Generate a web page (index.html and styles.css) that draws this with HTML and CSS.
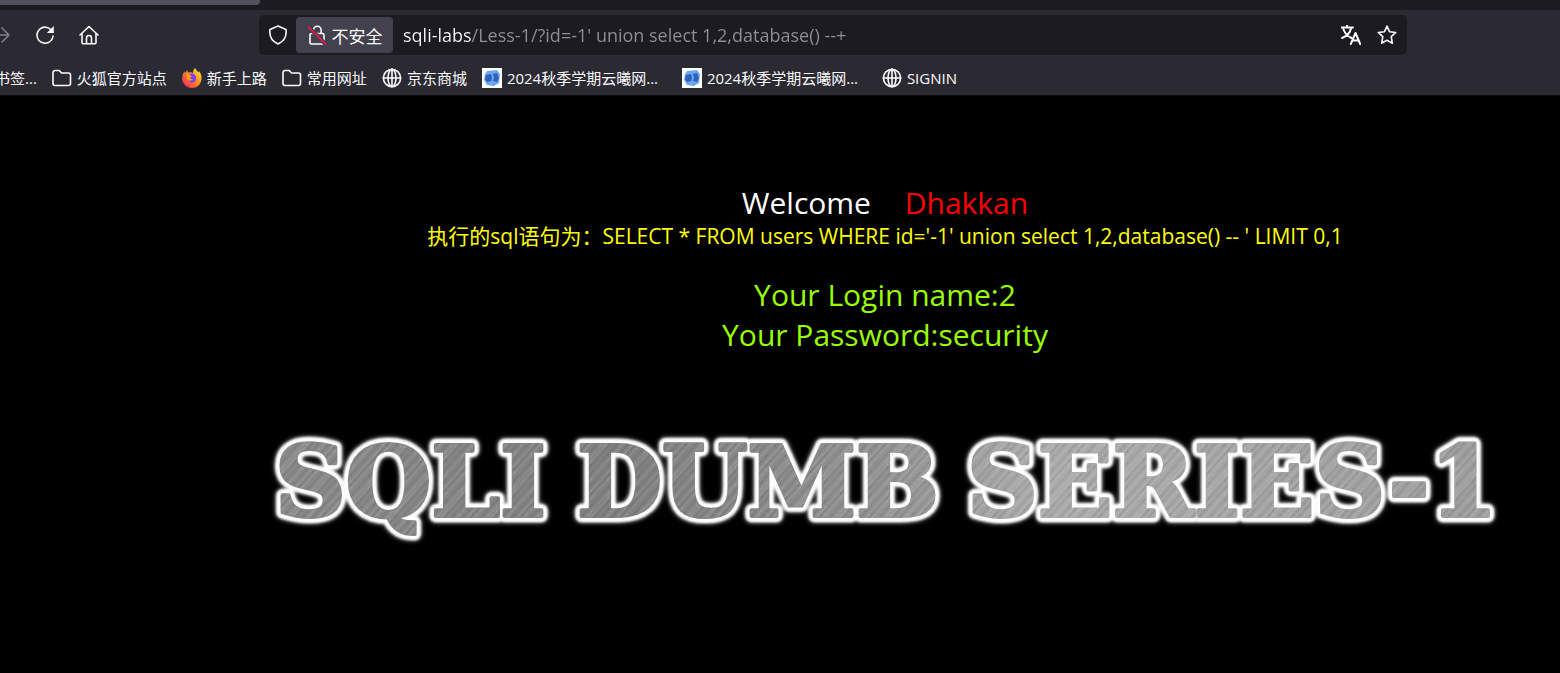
FILE: index.html
```
<!DOCTYPE html>
<html lang="zh-CN">
	<head>
		<meta charset="utf-8">
		<title>Less-1</title>
		<link rel="stylesheet" href="styles.css">
	</head>
	<body>
		<svg class="sprite" aria-hidden="true">
			<symbol id="folder" viewBox="0 0 20 20">
				<path d="M1 15.500V4.500a2 2 0 0 1 2-2h4.200l2.300 2.500h7a2 2 0 0 1 2 2v8.500a2 2 0 0 1-2 2H3a2 2 0 0 1-2-2z"/>
			</symbol>
			<symbol id="globe" viewBox="0 0 20 20">
				<circle cx="10" cy="10" r="8.600"/>
				<ellipse cx="10" cy="10" rx="4" ry="8.600"/>
				<path d="M10 1.400v17.200M1.400 10h17.200"/>
			</symbol>
			<symbol id="site" viewBox="0 0 20 20">
				<path fill="#fff" stroke="none" d="M0 0h20v20H0z"/>
				<path fill="#6ba6f8" stroke="none" d="M5 3l10-1 3 4-1 9-5 3-7-1-3-5 1-6z"/>
				<path fill="#2c62b8" stroke="none" d="M4 7l5-1 1 4-1 3-4 1-2-3zM11 6l4-1 2 5-2 4-4-1 1-3z"/>
			</symbol>
		</svg>

		<header class="browser">
			<div class="tabs"><div class="tab"></div></div>

			<div class="toolbar">
				<nav class="buttons">
					<button class="off" aria-label="前进">
						<svg viewBox="0 0 20 20"><path d="M1 10h17M11 3l7 7-7 7"/></svg>
					</button>
					<button aria-label="刷新">
						<svg viewBox="0 0 20 20"><path d="M17.500 7.300A8 8 0 1 0 18 11"/><path fill="#fbfbfe" stroke="none" d="M18.800 1v6.500a.6.6 0 0 1-.6.600h-6.400z"/></svg>
					</button>
					<button aria-label="主页">
						<svg viewBox="0 0 20 20"><path d="M1 10l9-8.500 9 8.500M3 8.500v9.200a1 1 0 0 0 1 1h12a1 1 0 0 0 1-1V8.500M7.500 18.500v-5.500a2.500 2.500 0 0 1 5 0v5.500"/></svg>
					</button>
				</nav>

				<div class="urlbar">
					<button class="shield" aria-label="跟踪保护">
						<svg viewBox="0 0 20 20"><path d="M10 1l8 3.500c.8 6-1.500 11.500-8 14.500-6.500-3-8.800-8.500-8-14.500z"/></svg>
					</button>
					<button class="insecure">
						<svg viewBox="0 0 20 20"><path d="M6.500 8V5a3.800 3.800 0 0 1 7.600 0v3M4.500 8.500h11a1.500 1.500 0 0 1 1.500 1.500v7.500a1.500 1.500 0 0 1-1.500 1.500h-11A1.500 1.500 0 0 1 3 17.500V10a1.500 1.500 0 0 1 1.500-1.500z"/><path stroke="#42414d" stroke-width="4" d="M2 2.500l16 16"/><path stroke="#ff1145" d="M1.500 2l17 17"/></svg>
						<span>不安全</span>
					</button>
					<input class="url" type="text" aria-label="地址" value="sqli-labs/Less-1/?id=-1' union select 1,2,database() --+">
					<button aria-label="翻译">
						<svg viewBox="0 0 20 20"><path stroke-width="2" d="M0 2.500h12M6 .5v2M10 3.500C9 8 5 11.500 1 13M2.500 4.500C4 8.500 6.500 11 10.500 13M9.800 19l4.700-11 4.700 11M11.500 15.500h6"/></svg>
					</button>
					<button aria-label="收藏">
						<svg viewBox="0 0 20 20"><path d="M10 1.200l2.500 5.500 6.300.8-4.600 4.200 1.200 6.600-5.400-3-5.400 3 1.200-6.600-4.600-4.200 6.300-.8z"/></svg>
					</button>
				</div>
			</div>

			<nav class="bookmarks">
				<a href="#">导入书签...</a>
				<a href="#"><svg><use href="#folder"/></svg>火狐官方站点</a>
				<a href="#">
					<svg viewBox="0 0 20 20">
						<defs>
							<linearGradient id="fire" x1="1" y1="0" x2="0" y2="1">
								<stop offset="0" stop-color="#fff34a"/>
								<stop offset=".45" stop-color="#ff8b1e"/>
								<stop offset="1" stop-color="#f5156c"/>
							</linearGradient>
						</defs>
						<path fill="url(#fire)" stroke="none" d="M13 0c1 2 2.500 3 3.500 4.500l.5-1.500c2 2.500 3 5 2.500 8.500-.8 5-4.500 8.500-9.500 8.500-5.500 0-9.500-4-9.800-9C0 8 .8 5.500 2.500 3.500L3 5.200 5 2l1 2.500c2.500-.3 4-.3 5 .5 0-2 .7-4 2-5z"/>
						<path fill="#7b3ff2" stroke="none" d="M7 6c2-1 4.500-.8 6 1s1.500 4.700 0 6.200c-2 2-5.500 1.600-7-.7 2 .6 3.500-.2 4.500-1.500C8.500 11 7 10 8.500 8.500z"/>
						<path fill="#ff9a20" stroke="none" d="M4 6l4 0c-.5 1 0 1.500 2 1.800-.2 1-2 1.200-2 2.200 0 1.500 2 1.200 3 .8-1 2-4 2.500-6 .5z"/>
					</svg>新手上路
				</a>
				<a href="#"><svg><use href="#folder"/></svg>常用网址</a>
				<a href="#"><svg><use href="#globe"/></svg>京东商城</a>
				<a href="#" class="long"><svg><use href="#site"/></svg>2024秋季学期云曦网...</a>
				<a href="#" class="long"><svg><use href="#site"/></svg>2024秋季学期云曦网...</a>
				<a href="#"><svg><use href="#globe"/></svg>SIGNIN</a>
			</nav>
		</header>

		<main>
			<p class="welcome">Welcome <span>Dhakkan</span></p>
			<p class="query">执行的sql语句为：SELECT * FROM users WHERE id='-1' union select 1,2,database() -- ' LIMIT 0,1</p>
			<p class="result">Your Login name:2<br>Your Password:security</p>

			<svg class="banner" viewBox="0 0 1260 140" role="img" aria-label="SQLI DUMB SERIES-1">
				<defs>
					<linearGradient id="steel" gradientUnits="userSpaceOnUse" x1="0" y1="0" x2="1260" y2="0">
						<stop offset="0" stop-color="#8a8a8a"/>
						<stop offset=".3" stop-color="#808080"/>
						<stop offset=".5" stop-color="#929292"/>
						<stop offset=".62" stop-color="#ababab"/>
						<stop offset="1" stop-color="#9c9c9c"/>
					</linearGradient>
					<pattern id="brush" width="37" height="200" patternUnits="userSpaceOnUse" patternTransform="rotate(42)">
						<path stroke="#fff" stroke-opacity=".08" d="M2 0v200M7 0v200M16 0v200M19 0v200M31 0v200"/>
						<path stroke="#000" stroke-opacity=".06" d="M4 0v200M12 0v200M22 0v200M27 0v200M35 0v200"/>
					</pattern>
				</defs>
				<g class="glow">
					<text y="97"><tspan x="20">SQLI</tspan> <tspan x="322">DUMB</tspan> <tspan x="712">SERIES-1</tspan></text>
				</g>
				<g class="metal" aria-hidden="true">
					<text y="97" fill="url(#steel)" stroke="url(#steel)"><tspan x="20">SQLI</tspan> <tspan x="322">DUMB</tspan> <tspan x="712">SERIES-1</tspan></text>
					<text y="97" fill="url(#brush)" stroke="url(#brush)"><tspan x="20">SQLI</tspan> <tspan x="322">DUMB</tspan> <tspan x="712">SERIES-1</tspan></text>
				</g>
			</svg>
		</main>
	</body>
</html>
```
FILE: styles.css
```
body {
	margin: 0;
	min-height: 100vh;
	overflow-x: hidden;
	background-color: #000;
	font-family: "Open Sans", "Noto Sans CJK SC", sans-serif;
}
svg {
	flex: none;
	width: 20px;
	height: 20px;
	fill: none;
	stroke: #fbfbfe;
	stroke-width: 1.6;
	stroke-linecap: round;
	stroke-linejoin: round;
}
.sprite {
	position: absolute;
	width: 0;
	height: 0;
}
button {
	display: flex;
	align-items: center;
	justify-content: center;
	padding: 0;
	border: none;
	background: none;
	color: #fbfbfe;
	font-family: inherit;
}

/* browser chrome */
.browser {
	overflow: hidden;
	background-color: #2b2a33;
	border-bottom: 1px solid #0c0c0d;
	color: #fbfbfe;
}
.tabs {
	height: 10px;
	background-color: #1c1b22;
}
.tab {
	width: 260px;
	height: 5px;
	border-radius: 0 0 4px 0;
	background-color: #52525e;
}
.toolbar {
	display: flex;
	align-items: center;
	padding: 5px 153px 5px 0;
}
.buttons {
	display: flex;
	margin-left: -21px;
	margin-right: 148px;
}
.buttons button {
	width: 44px;
	height: 40px;
}
.buttons .off {
	opacity: 0.4;
}
.urlbar {
	display: flex;
	align-items: center;
	flex: 1;
	height: 40px;
	padding: 0 2px 0 1px;
	border-radius: 5px;
	background-color: #1c1b22;
}
.urlbar button {
	width: 36px;
	height: 36px;
	border-radius: 4px;
}
.urlbar .insecure {
	gap: 5px;
	width: 97px;
	background-color: #42414d;
	font-size: 17px;
}
.url {
	flex: 1;
	min-width: 0;
	height: 36px;
	padding: 0 10px;
	border: none;
	outline: none;
	background: linear-gradient(90deg, #fbfbfe 79px, #8f8f95 79px);
	-webkit-background-clip: text;
	background-clip: text;
	color: transparent;
	font-family: inherit;
	font-size: 18px;
}
.bookmarks {
	display: flex;
	gap: 15px;
	height: 35px;
	margin-left: -35px;
	font-size: 15px;
	white-space: nowrap;
}
.bookmarks a {
	display: flex;
	align-items: center;
	gap: 5px;
	color: #fbfbfe;
	text-decoration: none;
}
.bookmarks .long {
	width: 185px;
}

/* the page is centred on a window wider than the visible part */
main {
	margin-left: 210px;
	padding-top: 87px;
	text-align: center;
}
p {
	margin: 0;
}
.welcome {
	color: #fff;
	font-size: 30px;
	line-height: 40px;
}
.welcome span {
	margin-left: 26px;
	color: #f00;
}
.query {
	color: #ff0;
	font-size: 21px;
	line-height: 26px;
}
.result {
	margin-top: 26px;
	color: #9f0;
	font-size: 30px;
	line-height: 40px;
}
.banner {
	display: block;
	width: 1260px;
	height: 140px;
	margin: 64px auto 0;
	font-family: "DejaVu Serif", serif;
	font-size: 98px;
	font-weight: bold;
	stroke: none;
}
.glow {
	fill: #fff;
	stroke: #fff;
	stroke-width: 12;
	filter: blur(1px) drop-shadow(0 0 2px #fff);
}
.metal {
	stroke-width: 4;
}
```
